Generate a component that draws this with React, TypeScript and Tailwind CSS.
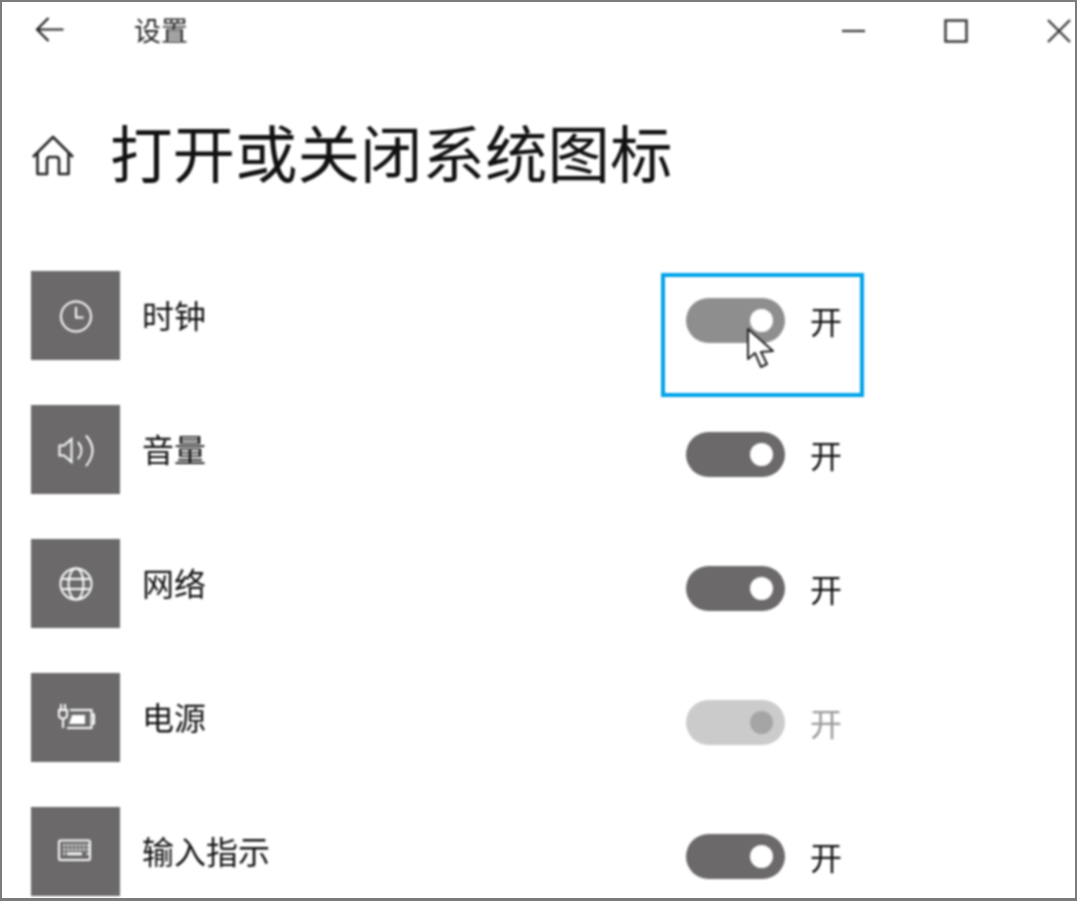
import React from "react";

const font = { fontFamily: '"Noto Sans CJK SC", "Noto Sans", sans-serif' };

function Clock() {
  return (
    <svg width="40" height="40" viewBox="0 0 40 40" fill="none" stroke="#ffffff" strokeWidth="2">
      <circle cx="20" cy="20.5" r="15" />
      <path d="M20 11V21.5H27.5" />
    </svg>
  );
}
function Speaker() {
  return (
    <svg width="40" height="40" viewBox="0 0 40 40" fill="none" stroke="#ffffff" strokeWidth="2">
      <path d="M3.5 15.5H8L15.5 9V32L8 25.5H3.5Z" />
      <path d="M22 12Q29 20.5 22 29" />
      <path d="M30 5.5Q43 20.5 30 36" />
    </svg>
  );
}
function Globe() {
  return (
    <svg width="40" height="40" viewBox="0 0 40 40" fill="none" stroke="#ffffff" strokeWidth="2">
      <circle cx="20" cy="20" r="15.5" />
      <ellipse cx="20" cy="20" rx="7.5" ry="15.5" />
      <path d="M6.5 15H33.5M6.5 25H33.5" />
    </svg>
  );
}
function Power() {
  return (
    <svg width="40" height="40" viewBox="0 0 40 40" fill="none" stroke="#ffffff" strokeWidth="2">
      <path d="M5 6V12M9 6V12M3 12H11V17Q11 20.5 7 20.5Q3 20.5 3 17ZM7 20.5V30" />
      <path d="M14 12H35.5V30H11" />
      <path d="M36 16.5H38V25.5H36" />
      <path d="M16 17H29V26H13Z" fill="#ffffff" stroke="none" />
    </svg>
  );
}
function Keyboard() {
  const keys: React.ReactNode[] = [];
  for (let r = 0; r < 3; r++) {
    for (let c = 0; c < 7; c++) {
      if (r === 2 && c > 0 && c < 6) continue;
      keys.push(<rect key={r + "-" + c} x={7 + c * 3.9} y={12 + r * 4.2} width="2.6" height="2.6" fill="#d4d4d4" />);
    }
  }
  return (
    <svg width="40" height="40" viewBox="0 0 40 40" fill="none" stroke="#ffffff" strokeWidth="2">
      <rect x="3" y="8.5" width="31" height="19.5" rx="1.5" />
      <g stroke="none">
        {keys}
        <rect x="11" y="20.4" width="15" height="2.8" fill="#ffffff" />
      </g>
    </svg>
  );
}

function Cursor() {
  return (
    <svg
      className="absolute left-[81px] top-[50px]"
      width="32"
      height="46"
      viewBox="0 0 32 46"
      fill="#ffffff"
      stroke="#222222"
      strokeWidth="2"
      strokeLinejoin="round"
    >
      <path d="M2 2V32L9 26L15 40L21 37L15 25L27 24Z" />
    </svg>
  );
}

type Row = {
  label: string;
  icon: React.ReactNode;
  state: "on" | "hover" | "disabled";
};

const rows: Row[] = [
  { label: "时钟", icon: <Clock />, state: "hover" },
  { label: "音量", icon: <Speaker />, state: "on" },
  { label: "网络", icon: <Globe />, state: "on" },
  { label: "电源", icon: <Power />, state: "disabled" },
  { label: "输入指示", icon: <Keyboard />, state: "on" },
];

function ToggleRow({ row }: { row: Row }) {
  const track =
    row.state === "hover" ? "bg-[#8f8e8e]" : row.state === "disabled" ? "bg-[#cbcbcb]" : "bg-[#6b6969]";
  const knob = row.state === "disabled" ? "bg-[#a6a5a5]" : "bg-white";
  const text = row.state === "disabled" ? "text-[#9a9a9a]" : "text-[#111111]";
  const frame = row.state === "hover" ? "border-[#00a2ea]" : "border-transparent";
  return (
    <div className="flex h-[134px] shrink-0 items-start">
      <div className="flex h-[89px] w-[89px] shrink-0 items-center justify-center bg-[#6b6969]">{row.icon}</div>
      <div className="ml-[22px] flex h-[85px] w-[507px] shrink-0 items-center text-[32px] leading-none text-[#111111]">
        {row.label}
      </div>
      <div
        className={"relative ml-[12px] mt-[2px] flex h-[124px] w-[203px] shrink-0 items-start border-4 pl-[21px] pt-[21px] " + frame}
      >
        <div className={"flex h-[45px] w-[99px] shrink-0 items-center justify-end rounded-full pr-[12px] " + track}>
          <div className={"h-[23px] w-[23px] rounded-full " + knob}></div>
        </div>
        <div className={"ml-[25px] h-[45px] text-[32px] leading-[44px] " + text}>开</div>
        {row.state === "hover" && <Cursor />}
      </div>
    </div>
  );
}

export default function App() {
  return (
    <div className="h-[901px] w-[1077px] overflow-hidden bg-white" style={font}>
      <div className="h-[901px] w-[1077px] overflow-hidden border-2 border-b-[3px] border-[#7c7c7c]">
        <div className="h-full blur-[1px]">
          <div className="flex h-[58px] items-center">
            <svg className="mb-[3px] ml-[33px] shrink-0" width="30" height="30" viewBox="0 0 30 30" fill="none" stroke="#222" strokeWidth="2.2">
              <path d="M13.5 3L2 14.5L13.5 26M2.5 14.5H28.5" />
            </svg>
            <div className="mb-[4px] ml-[69px] text-[27px] leading-none text-[#222]">设置</div>
            <svg className="ml-[654px] shrink-0" width="23" height="24" viewBox="0 0 23 24" fill="none" stroke="#333" strokeWidth="2.2">
              <path d="M0 12H23" />
            </svg>
            <svg className="ml-[79px] shrink-0" width="24" height="24" viewBox="0 0 24 24" fill="none" stroke="#333" strokeWidth="2.4">
              <rect x="1.5" y="1.5" width="21" height="21" />
            </svg>
            <svg className="ml-[79px] shrink-0" width="24" height="24" viewBox="0 0 24 24" fill="none" stroke="#333" strokeWidth="2.2">
              <path d="M1 1L23 23M23 1L1 23" />
            </svg>
          </div>
          <div className="mt-[54px] flex h-[74px] items-center">
            <svg className="ml-[29px] mt-[10px] shrink-0" width="44" height="44" viewBox="0 0 44 44" fill="none" stroke="#222" strokeWidth="2.6">
              <path d="M2 23L22 3L42 23M6.5 19V40H16V26Q16 23 19 23H25Q28 23 28 26V40H37.5V19" strokeLinejoin="round" />
            </svg>
            <h1 className="ml-[35px] text-[62.5px] font-normal leading-none text-[#111]">打开或关闭系统图标</h1>
          </div>
          <div className="ml-[29px] mt-[83px] flex flex-col">
            {rows.map((r) => (
              <ToggleRow key={r.label} row={r} />
            ))}
          </div>
        </div>
      </div>
    </div>
  );
}
